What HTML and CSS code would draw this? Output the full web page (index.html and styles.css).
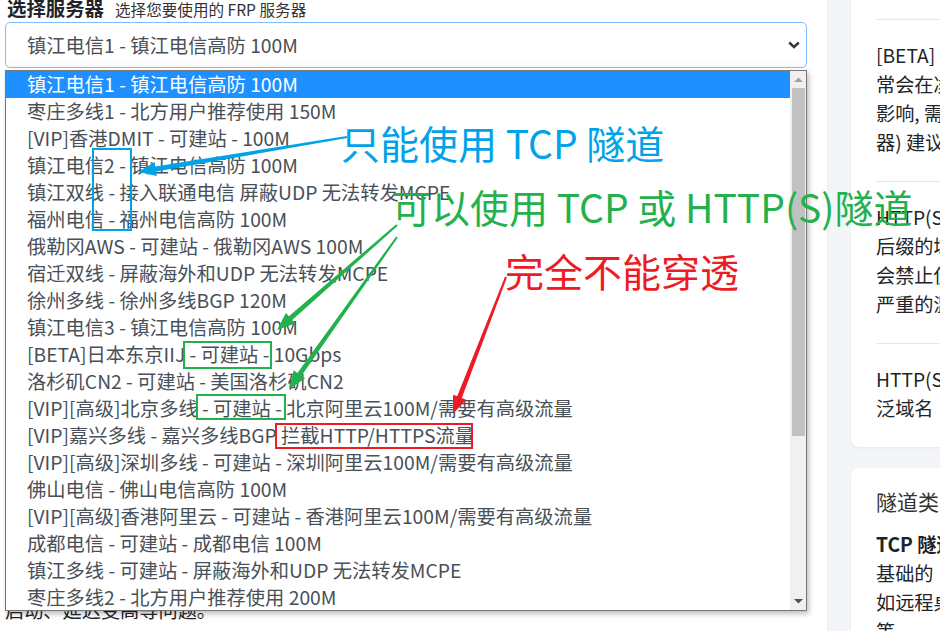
FILE: index.html
```html
<!DOCTYPE html>
<html lang="zh-CN">
<head>
<meta charset="utf-8">
<title>选择服务器</title>
<link rel="stylesheet" href="styles.css">
</head>
<body>
<div class="page">
  <main class="left">
    <div class="title-row">
      <h2 class="title">选择服务器</h2>
      <small class="subtitle">选择您要使用的 FRP 服务器</small>
    </div>
    <div class="select">
      <span class="select-value">镇江电信1 - 镇江电信高防 100M</span>
      <svg class="chev" width="12" height="8" viewBox="0 0 12 8"><path d="M1.2 1.5 L6 6 L10.8 1.5" fill="none" stroke="#343a40" stroke-width="2.4"/></svg>
    </div>
    <p class="note">部分节点在高峰时段可能会出现连接不稳定、无法<br>启动、延迟变高等问题。</p>

    <div class="dropdown">
      <ul class="options">
        <li class="opt selected">镇江电信1 - 镇江电信高防 100M</li>
        <li class="opt">枣庄多线1 - 北方用户推荐使用 150M</li>
        <li class="opt">[VIP]香港DMIT - 可建站 - 100M</li>
        <li class="opt">镇江电信2 - 镇江电信高防 100M</li>
        <li class="opt">镇江双线 - 接入联通电信 屏蔽UDP 无法转发MCPE</li>
        <li class="opt">福州电信 - 福州电信高防 100M</li>
        <li class="opt">俄勒冈AWS - 可建站 - 俄勒冈AWS 100M</li>
        <li class="opt">宿迁双线 - 屏蔽海外和UDP 无法转发MCPE</li>
        <li class="opt">徐州多线 - 徐州多线BGP 120M</li>
        <li class="opt">镇江电信3 - 镇江电信高防 100M</li>
        <li class="opt">[BETA]日本东京IIJ - 可建站 - 10Gbps</li>
        <li class="opt">洛杉矶CN2 - 可建站 - 美国洛杉矶CN2</li>
        <li class="opt">[VIP][高级]北京多线 - 可建站 - 北京阿里云100M/需要有高级流量</li>
        <li class="opt">[VIP]嘉兴多线 - 嘉兴多线BGP 拦截HTTP/HTTPS流量</li>
        <li class="opt">[VIP][高级]深圳多线 - 可建站 - 深圳阿里云100M/需要有高级流量</li>
        <li class="opt">佛山电信 - 佛山电信高防 100M</li>
        <li class="opt">[VIP][高级]香港阿里云 - 可建站 - 香港阿里云100M/需要有高级流量</li>
        <li class="opt">成都电信 - 可建站 - 成都电信 100M</li>
        <li class="opt">镇江多线 - 可建站 - 屏蔽海外和UDP 无法转发MCPE</li>
        <li class="opt">枣庄多线2 - 北方用户推荐使用 200M</li>
      </ul>
      <div class="scrollbar">
        <span class="sb-btn"><svg width="9" height="5" viewBox="0 0 9 5"><path d="M0 5 L4.5 0.5 L9 5Z" fill="#a3a3a3"/></svg></span>
        <span class="sb-thumb"></span>
        <span class="sb-rest"></span>
        <span class="sb-btn"><svg width="9" height="5" viewBox="0 0 9 5"><path d="M0 0 L4.5 4.5 L9 0Z" fill="#505050"/></svg></span>
      </div>
    </div>
  </main>

  <aside class="right">
    <section class="card card-info">
      <p class="info-block">[BETA] 于测试阶段的节点，可能随时下线<br>常会在凌晨进行维护，期间服务会受到<br>影响, 需要稳定服务的用户请选择其他服<br>器) 建议优先选择带有高防标识的节点</p>
      <p class="info-block">HTTP(S) 隧道需要绑定已备案且无违规<br>后缀的域名，未备案域名将被拦截，我们<br>会禁止使用者继续创建任何隧道，情节<br>严重的滥用行为将会被永久封禁账号</p>
      <p class="info-block">HTTP(S) 隧道支持自定义域名以及<br>泛域名</p>
    </section>
    <section class="card card-types">
      <h3 class="types-title">隧道类型说明</h3>
      <p class="types-text"><strong>TCP 隧道</strong><br>基础的&nbsp;&nbsp;端口映射方式，适用于绝大多数<br>如远程桌面、游戏联机、SSH 连接<br>等</p>
    </section>
  </aside>

  <div class="annot">
    <svg class="annot-svg" width="940" height="631" viewBox="0 0 940 631">
      <rect x="93" y="149" width="38" height="81" fill="none" stroke="#00a2e8" stroke-width="2"/>
      <polygon fill="#00a2e8" points="346.8,136.0 155.3,166.6 154.6,162.1 138,172 156.9,175.9 156.2,171.5 347.2,138.0"/>
      <rect x="184" y="342" width="87" height="26" fill="none" stroke="#22b14c" stroke-width="2"/>
      <rect x="197" y="395" width="88" height="24" fill="none" stroke="#22b14c" stroke-width="2"/>
      <polygon fill="#22b14c" points="396.3,224.2 288.9,316.3 285.9,312.9 277,330 295.2,323.4 292.2,320.0 397.7,225.8"/>
      <polygon fill="#22b14c" points="396.2,236.4 297.4,372.9 293.7,370.3 289,389 305.1,378.4 301.5,375.8 397.8,237.6"/>
      <rect x="276" y="424" width="196" height="24" fill="none" stroke="#ed1c24" stroke-width="2"/>
      <polygon fill="#ed1c24" points="505.1,276.6 457.2,396.3 453.0,394.7 453,414 466.0,399.7 461.8,398.1 506.9,277.4"/>
    </svg>
    <div class="label label-blue">只能使用 TCP 隧道</div>
    <div class="label label-green">可以使用 TCP 或 HTTP(S)隧道</div>
    <div class="label label-red">完全不能穿透</div>
  </div>
</div>
</body>
</html>
```

FILE: styles.css
```css
html, body {
  margin: 0;
  padding: 0;
  width: 940px;
  height: 631px;
  overflow: hidden;
  background: #f4f5f9;
  font-family: "Noto Sans CJK SC", "Noto Sans", sans-serif;
  color: #212529;
}

.page {
  position: relative;
  display: flex;
  align-items: flex-start;
  gap: 24px;
  width: 1400px;
  height: 631px;
}

/* ---------- left column ---------- */
.left {
  position: relative;
  width: 827px;
  flex: 0 0 827px;
  height: 700px;
  box-sizing: border-box;
  padding-left: 5px;
  padding-right: 20px;
  background: #fff;
  box-shadow: 1px 0 2px rgba(0, 0, 0, 0.04);
}

.title-row {
  display: flex;
  align-items: baseline;
  gap: 11px;
  height: 16px;
  line-height: 16px;
  padding-left: 2px;
}

.title {
  margin: 0;
  font-size: 19.4px;
  font-weight: 700;
  color: #212529;
}

.subtitle {
  font-size: 15.6px;
  color: #333;
}

.select {
  margin-top: 6px;
  height: 46px;
  width: 802px;
  box-sizing: border-box;
  border: 1px solid #80bdff;
  border-radius: 5px;
  padding: 0 6px 0 21px;
  display: flex;
  align-items: center;
  justify-content: space-between;
  font-size: 19.3px;
  color: #495057;
  background: #fff;
  box-shadow: inset 0 -3px 4px rgba(0, 0, 0, 0.03);
}

.chev {
  display: block;
}

.note {
  margin: 499px 0 0;
  font-size: 19.2px;
  line-height: 29px;
  color: #212529;
}

/* ---------- dropdown menu (overlay) ---------- */
.dropdown {
  position: absolute;
  left: 5px;
  top: 70px;
  width: 802px;
  height: 541px;
  box-sizing: border-box;
  border: 1px solid #767676;
  background: #fff;
  display: flex;
  box-shadow: 2px 3px 5px rgba(0, 0, 0, 0.25);
  overflow: hidden;
}

.options {
  list-style: none;
  margin: 0;
  padding: 0;
  flex: 1;
}

.opt {
  height: 27px;
  line-height: 27px;
  padding-left: 21px;
  font-size: 19.3px;
  color: #495057;
  white-space: nowrap;
}

.opt.selected {
  background: #1e90ff;
  color: #fff;
}

.scrollbar {
  width: 16px;
  flex: 0 0 16px;
  background: #f0f0f0;
  display: flex;
  flex-direction: column;
}

.sb-btn {
  height: 17px;
  flex: 0 0 17px;
  display: flex;
  align-items: center;
  justify-content: center;
}

.sb-thumb {
  height: 348px;
  flex: 0 0 348px;
  margin: 0 1px 0 2px;
  background: #c1c1c1;
}

.sb-rest {
  flex: 1;
}

/* ---------- right column ---------- */
.right {
  width: 420px;
  flex: 0 0 420px;
  display: flex;
  flex-direction: column;
  gap: 21px;
}

.card {
  flex: 0 0 auto;
  background: #fff;
  border-radius: 8px;
  padding-left: 25px;
  box-shadow: 0 1px 3px rgba(0, 0, 0, 0.05);
  overflow: hidden;
  white-space: nowrap;
}

.card-info {
  border-radius: 0 0 8px 8px;
  padding-top: 19px;
}

.info-block {
  margin: 0;
  border-top: 1px solid #e6e6e6;
  padding: 21px 0 24px;
  font-size: 19.2px;
  line-height: 29px;
  color: #212529;
}

.card-types {
  padding-top: 18px;
  padding-bottom: 30px;
}

.types-title {
  margin: 0 0 14px;
  font-size: 21px;
  line-height: 30px;
  font-weight: 400;
  color: #333;
}

.types-text {
  margin: 0;
  font-size: 19.2px;
  line-height: 29px;
  color: #212529;
}

.types-text strong {
  font-weight: 700;
  color: #1f2328;
}

/* ---------- annotations (drawn over the page) ---------- */
.annot {
  position: absolute;
  left: 0;
  top: 0;
  width: 940px;
  height: 631px;
  pointer-events: none;
}

.annot-svg {
  position: absolute;
  left: 0;
  top: 0;
}

.label {
  position: absolute;
  font-size: 39px;
  line-height: 39px;
  white-space: nowrap;
  font-weight: 400;
}

.label-blue {
  left: 341px;
  top: 123px;
  color: #00a2e8;
}

.label-green {
  left: 392px;
  top: 187px;
  color: #22b14c;
}

.label-red {
  left: 505px;
  top: 251px;
  color: #ed1c24;
}
```
